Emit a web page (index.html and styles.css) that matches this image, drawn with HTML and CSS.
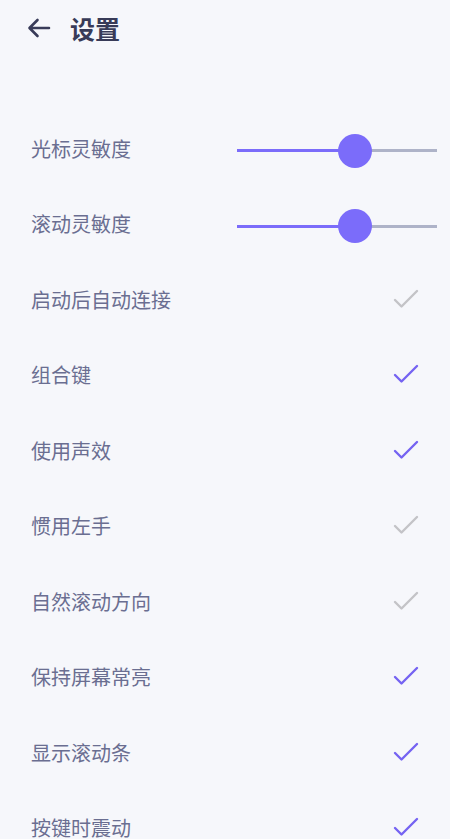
FILE: index.html
```html
<!DOCTYPE html>
<html lang="zh-CN">
<head>
  <meta charset="UTF-8">
  <title>设置</title>
  <link rel="stylesheet" href="styles.css">
</head>
<body>
  <header class="top-bar">
    <svg class="back" width="26" height="22" viewBox="0 0 26 22">
      <path d="M23 11 H4 M11.5 3 L3.5 11 L11.5 19" fill="none" stroke="currentColor" stroke-width="2.6" stroke-linecap="round" stroke-linejoin="round"/>
    </svg>
    <h1 class="title">设置</h1>
  </header>

  <ul class="settings">
    <li class="row">
      <span class="label">光标灵敏度</span>
      <div class="slider">
        <div class="fill" style="width: 59%"></div>
        <div class="thumb" style="left: 59%"></div>
      </div>
    </li>
    <li class="row">
      <span class="label">滚动灵敏度</span>
      <div class="slider">
        <div class="fill" style="width: 59%"></div>
        <div class="thumb" style="left: 59%"></div>
      </div>
    </li>
    <li class="row">
      <span class="label">启动后自动连接</span>
      <svg class="check off" width="28" height="22" viewBox="0 0 28 22"><polyline points="3,11 9.5,17.5 25,2"/></svg>
    </li>
    <li class="row">
      <span class="label">组合键</span>
      <svg class="check on" width="28" height="22" viewBox="0 0 28 22"><polyline points="3,11 9.5,17.5 25,2"/></svg>
    </li>
    <li class="row">
      <span class="label">使用声效</span>
      <svg class="check on" width="28" height="22" viewBox="0 0 28 22"><polyline points="3,11 9.5,17.5 25,2"/></svg>
    </li>
    <li class="row">
      <span class="label">惯用左手</span>
      <svg class="check off" width="28" height="22" viewBox="0 0 28 22"><polyline points="3,11 9.5,17.5 25,2"/></svg>
    </li>
    <li class="row">
      <span class="label">自然滚动方向</span>
      <svg class="check off" width="28" height="22" viewBox="0 0 28 22"><polyline points="3,11 9.5,17.5 25,2"/></svg>
    </li>
    <li class="row">
      <span class="label">保持屏幕常亮</span>
      <svg class="check on" width="28" height="22" viewBox="0 0 28 22"><polyline points="3,11 9.5,17.5 25,2"/></svg>
    </li>
    <li class="row">
      <span class="label">显示滚动条</span>
      <svg class="check on" width="28" height="22" viewBox="0 0 28 22"><polyline points="3,11 9.5,17.5 25,2"/></svg>
    </li>
    <li class="row">
      <span class="label">按键时震动</span>
      <svg class="check on" width="28" height="22" viewBox="0 0 28 22"><polyline points="3,11 9.5,17.5 25,2"/></svg>
    </li>
  </ul>
</body>
</html>
```

FILE: styles.css
```css
body {
  margin: 0;
  background-color: #f6f7fb;
  font-family: "Noto Sans CJK SC", "Noto Sans", sans-serif;
  overflow: hidden;
}

.top-bar {
  display: flex;
  align-items: center;
  height: 56px;
  padding-left: 26px;
  color: #383b58;
}

.back {
  display: block;
}

.title {
  margin: 0 0 0 18px;
  font-size: 25px;
  font-weight: 700;
  line-height: 1;
  color: #383b58;
}

.settings {
  list-style: none;
  margin: 0;
  padding: 55px 0 0 0;
}

.row {
  display: flex;
  align-items: center;
  justify-content: space-between;
  height: 75.5px;
  padding: 0 13px 0 31px;
}

.label {
  font-size: 20px;
  color: #6a6e91;
  line-height: 1;
}

.slider {
  position: relative;
  width: 200px;
  height: 3px;
  margin-top: 4px;
  background-color: #aeb3c8;
}

.fill {
  height: 100%;
  background-color: #7b6cfa;
}

.thumb {
  position: absolute;
  top: 50%;
  width: 34px;
  height: 34px;
  margin: -17px 0 0 -17px;
  border-radius: 50%;
  background-color: #7b6cfa;
}

.check {
  display: block;
  margin-right: 17px;
}

.check polyline {
  fill: none;
  stroke-width: 2.4;
  stroke-linecap: round;
  stroke-linejoin: round;
}

.check.on polyline {
  stroke: #7563f2;
}

.check.off polyline {
  stroke: #c3c3c7;
}
```
